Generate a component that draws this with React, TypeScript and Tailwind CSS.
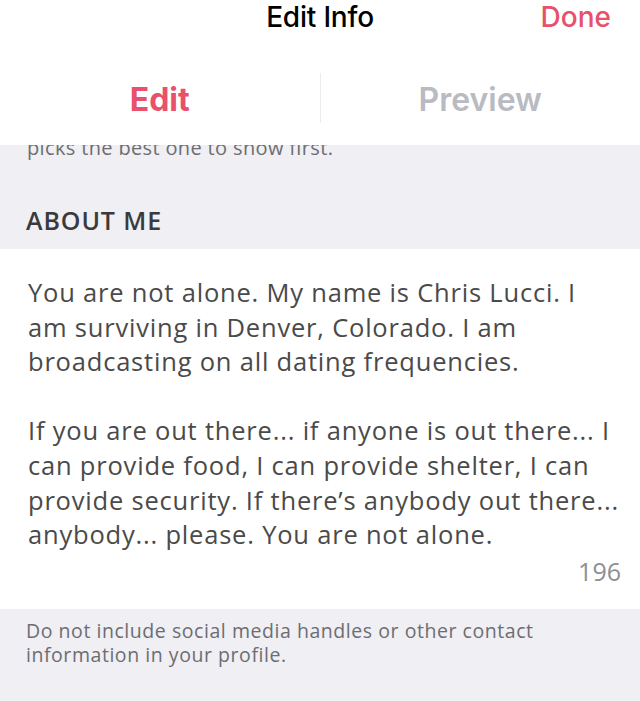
export default function App() {
  const body = "font-['Open_Sans','Liberation_Sans',sans-serif]";
  return (
    <div className="w-[640px] h-[701px] overflow-hidden bg-[#efeff4] flex flex-col">
      {/* Top bar */}
      <div className="bg-white shrink-0">
        <div className="relative h-[40px] font-['Inter','Liberation_Sans',sans-serif]">
          <div className="absolute left-0 right-0 top-[-4px] text-center text-[28px] font-medium text-black tracking-[-0.2px]">
            Edit Info
          </div>
          <div className="absolute right-[29px] top-[-4px] text-[28px] font-medium text-[#e8506b]">
            Done
          </div>
        </div>
        <div className="h-[105px] flex items-center font-['Inter','Liberation_Sans',sans-serif]">
          <div className="flex-1 text-center text-[32px] font-bold text-[#e8506b] pt-[14px]">Edit</div>
          <div className="w-px h-[50px] bg-[#ececec] mt-[10px]" />
          <div className="flex-1 text-center text-[32px] font-semibold text-[#b8bbc2] pt-[14px]">Preview</div>
        </div>
      </div>

      {/* Clipped hint line + section header */}
      <div className={`h-[104px] overflow-hidden shrink-0 ${body}`}>
        <p className="mt-[-9px] px-[27px] text-[20px] leading-[24px] tracking-[0.35px] text-[#6d6d72]">
          picks the best one to show first.
        </p>
        <p className="mt-[44px] px-[26px] text-[25px] font-semibold text-[#3a3a3c] leading-[32px] tracking-[0.9px]">ABOUT ME</p>
      </div>

      {/* Bio */}
      <div className={`bg-white pl-[28px] pr-[18px] pt-[26px] pb-[21px] shrink-0 ${body}`}>
        <p className="text-[25.5px] leading-[34.6px] tracking-[0.8px] text-[#4a4a4a]">
          You are not alone. My name is Chris Lucci. I am surviving in Denver, Colorado. I am broadcasting on all dating frequencies.
        </p>
        <p className="mt-[34.6px] text-[25.5px] leading-[34.6px] tracking-[0.8px] text-[#4a4a4a]">
          If you are out there... if anyone is out there... I can provide food, I can provide shelter, I can provide security. If there’s anybody out there... anybody... please. You are not alone.
        </p>
        <div className="text-right text-[25px] leading-[34px] text-[#8e8e93] mt-[2px] mr-[1px]">196</div>
      </div>

      {/* Footer note */}
      <div className={`px-[26px] pt-[10px] ${body}`}>
        <p className="text-[19.5px] leading-[24px] tracking-[0.55px] text-[#6d6d72] max-w-[560px]">
          Do not include social media handles or other contact information in your profile.
        </p>
      </div>
    </div>
  );
}
